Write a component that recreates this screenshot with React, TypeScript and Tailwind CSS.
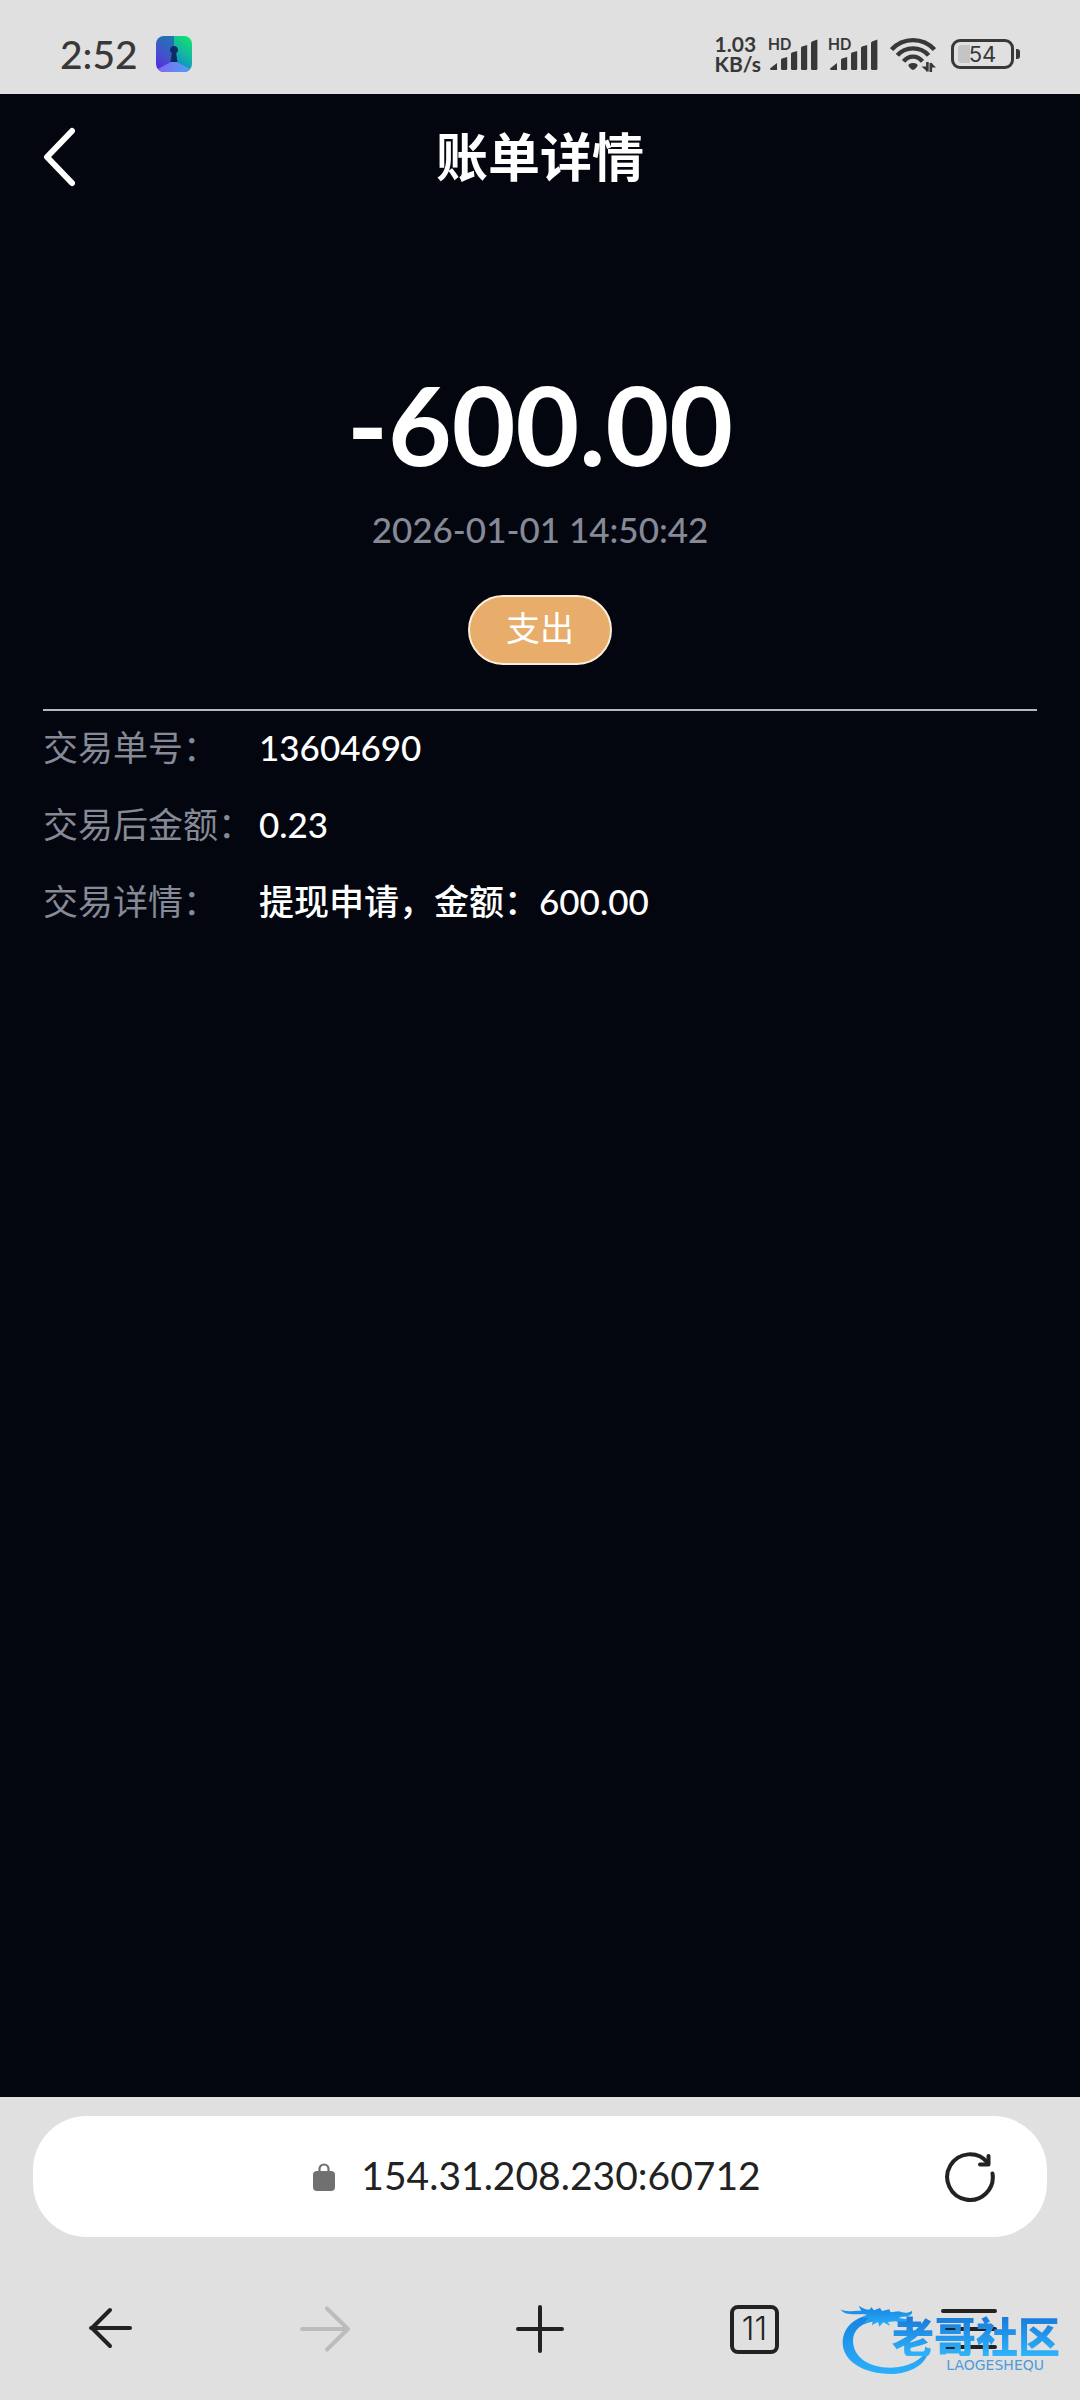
import type { ReactNode } from 'react';

const detailRows = [
  { label: '交易单号：', value: '13604690' },
  { label: '交易后金额：', value: '0.23' },
  { label: '交易详情：', value: '提现申请，金额：600.00' },
];

function LockAppIcon() {
  return (
    <svg className="size-9 shrink-0" viewBox="0 0 36 36" aria-hidden="true">
      <defs>
        <clipPath id="app-clip">
          <rect width="36" height="36" rx="8" />
        </clipPath>
        <linearGradient id="app-left" x1="0.6" y1="0" x2="0.2" y2="1">
          <stop offset="0" stopColor="#2272b4" />
          <stop offset="0.55" stopColor="#4450cf" />
          <stop offset="1" stopColor="#5a22dc" />
        </linearGradient>
        <linearGradient id="app-right" x1="0.7" y1="0" x2="0.3" y2="1">
          <stop offset="0" stopColor="#10e070" />
          <stop offset="0.45" stopColor="#14b8a0" />
          <stop offset="1" stopColor="#0a80d4" />
        </linearGradient>
        <linearGradient id="app-floor" x1="0" y1="0" x2="1" y2="0">
          <stop offset="0" stopColor="#8566f4" />
          <stop offset="1" stopColor="#4aa2f2" />
        </linearGradient>
      </defs>
      <g clipPath="url(#app-clip)">
        <rect width="18" height="36" fill="url(#app-left)" />
        <rect x="18" width="18" height="36" fill="url(#app-right)" />
        <path d="M0 34 L15 26 H21 L36 34 V36 H0 Z" fill="url(#app-floor)" />
        <path d="M18 10 a4 4 0 0 1 2.2 7.3 L21.5 26 H14.5 L15.8 17.3 A4 4 0 0 1 18 10 Z" fill="#0c2a63" />
      </g>
    </svg>
  );
}

function SignalBars() {
  return (
    <div className="relative h-9 w-[50px]">
      <span className="absolute top-0 left-0 font-['Inter'] text-[16px] leading-4 font-semibold">HD</span>
      <svg className="size-full" viewBox="0 0 50 36" fill="currentColor" aria-hidden="true">
        <path d="M2 32.5 L9 27 V34 H3.5 Q2 34 2 32.5Z" />
        <path d="M13 24 Q13 23 14 22.6 L19.2 21 V32.5 Q19.2 34 18 34 H14.2 Q13 34 13 32.5Z" />
        <path d="M23 18 Q23 17 24 16.6 L29.2 15 V32.5 Q29.2 34 28 34 H24.2 Q23 34 23 32.5Z" />
        <path d="M33 12 Q33 11 34 10.6 L39.2 9 V32.5 Q39.2 34 38 34 H34.2 Q33 34 33 32.5Z" />
        <path d="M43 7 Q43 6 44 5.4 L49.4 3.4 V32.5 Q49.4 34 48.2 34 H44.2 Q43 34 43 32.5Z" />
      </svg>
    </div>
  );
}

function WifiIcon() {
  return (
    <svg className="h-9 w-[46px] shrink-0" viewBox="0 0 46 36" fill="none" stroke="currentColor" strokeWidth="4.4" aria-hidden="true">
      <path d="M1.6 13.6 C13 1 33 1 44.4 13.6" />
      <path d="M7.4 19.4 C15.5 10 30.5 10 38.6 19.4" />
      <path d="M13.6 25.4 C18.5 19 27.5 19 32.4 25.4" />
      <path d="M23 27 C26 27 27.6 28.2 27.6 29.6 C27.6 31 24 34 23 34 C22 34 18.4 31 18.4 29.6 C18.4 28.2 20 27 23 27Z" fill="currentColor" stroke="none" />
      <path d="M37.4 26 V35.4 M40.8 36 V27" strokeWidth="2.6" />
      <path d="M37 35.5 L31.5 30.5 H37Z M41 26.5 L46 31.5 H41Z" fill="currentColor" stroke="none" />
    </svg>
  );
}

function Battery() {
  return (
    <div className="flex items-center gap-[2px]">
      <div className="relative flex h-[30px] w-[63px] items-center justify-center rounded-[9px] border-[3px] border-current">
        <span className="absolute inset-y-[3px] left-1 w-3 rounded-l-[4px] bg-[#c4c4c4]" />
        <span className="relative font-['Inter'] text-[22px] leading-none">54</span>
      </div>
      <span className="h-[10px] w-1 rounded-r-[3px] bg-current" />
    </div>
  );
}

function StatusBar() {
  return (
    <div className="flex h-[94px] shrink-0 items-center justify-between bg-[#e0e0e0] pt-[14px] pr-[60px] pl-[60px] text-[#383838]">
      <div className="flex items-center gap-[18px]">
        <time className="font-['Lato'] text-[39px] leading-none font-medium">2:52</time>
        <LockAppIcon />
      </div>
      <div className="flex items-center">
        <div className="mr-[7px] font-['Lato'] text-[21px] leading-5 font-bold">
          <p>1.03</p>
          <p>KB/s</p>
        </div>
        <div className="mr-3 flex gap-[10px]">
          <SignalBars />
          <SignalBars />
        </div>
        <WifiIcon />
        <div className="ml-[15px]">
          <Battery />
        </div>
      </div>
    </div>
  );
}

function NavButton({ label, disabled, children }: { label: string; disabled?: boolean; children: ReactNode }) {
  return (
    <button type="button" aria-label={label} disabled={disabled} className="flex h-20 items-center justify-center text-[#222] disabled:text-[#bcbcbc]">
      {children}
    </button>
  );
}

function LineIcon({ d }: { d: string }) {
  return (
    <svg className="size-[60px]" viewBox="0 0 60 60" fill="none" stroke="currentColor" strokeWidth="4" strokeLinecap="round" strokeLinejoin="round" aria-hidden="true">
      <path d={d} />
    </svg>
  );
}

function CommunityMark() {
  return (
    <div className="pointer-events-none absolute right-4 bottom-[22px] h-[76px] w-[226px]">
      <svg className="size-full" viewBox="58 64 678 228" aria-hidden="true">
        <defs>
          <linearGradient id="dragon" x1="0" y1="0" x2="0" y2="1">
            <stop offset="0" stopColor="#1482e2" />
            <stop offset="1" stopColor="#2cb0fb" />
          </linearGradient>
        </defs>
        <g fill="url(#dragon)">
          <path d="M160 100 C100 112 72 145 72 188 C74 244 138 280 215 280 C278 279 328 250 333 198 C312 238 268 260 215 261 C150 260 104 230 103 180 C103 148 128 124 178 120 Z" />
          <path d="M66 86 C82 96 104 90 128 90 L120 75 C132 84 142 86 152 87 L158 80 L166 89 L184 82 L190 91 L212 86 L216 95 L240 92 C254 98 270 98 280 90 C284 102 268 108 250 108 L240 112 L280 118 C276 130 262 132 246 128 L232 122 L208 124 L214 136 L194 125 L182 138 L178 124 L160 134 L162 119 L136 128 L148 112 L128 112 L146 102 C112 98 78 108 66 86 Z" />
        </g>
      </svg>
      <div className="absolute top-3 right-1 flex flex-col items-end gap-[2px]">
        <p className="bg-linear-to-b from-[#1976d8] to-[#30b4fa] bg-clip-text font-['Noto_Sans_CJK_SC',sans-serif] text-[42px] leading-[42px] font-black text-transparent">老哥社区</p>
        <p className="pr-4 font-['DejaVu_Sans'] text-[14px] leading-[14px] text-[#4e9bd8]">LAOGESHEQU</p>
      </div>
    </div>
  );
}

function BrowserBar() {
  return (
    <footer className="relative shrink-0 bg-[#e0e0e0] pt-[19px] pb-[31px]">
      <div className="mx-[33px] flex h-[121px] items-center rounded-[54px] bg-white px-[52px] text-[#222]">
        <span className="w-11" />
        <label className="flex flex-1 items-center justify-center gap-[26px]">
          <svg className="h-7 w-[22px] text-[#707070]" viewBox="0 0 22 28" aria-hidden="true">
            <rect y="8" width="22" height="20" rx="4" fill="currentColor" />
            <path d="M6.5 10 V6 a4.5 4.5 0 0 1 9 0 V10" fill="none" stroke="currentColor" strokeWidth="2.2" />
          </svg>
          <input
            type="text"
            aria-label="网址"
            defaultValue="154.31.208.230:60712"
            className="field-sizing-content bg-transparent pb-1 font-['Lato'] text-[39px] leading-[52px] outline-none"
          />
        </label>
        <button type="button" aria-label="刷新" className="size-[50px]">
          <svg className="size-full" viewBox="0 0 50 50" fill="none" stroke="currentColor" strokeWidth="4" strokeLinecap="round" strokeLinejoin="round" aria-hidden="true">
            <path d="M47.5 21.5 A22.8 22.8 0 1 1 42.5 10.5" />
            <path d="M43.5 4 V12.5 H35" />
          </svg>
        </button>
      </div>
      <nav className="mt-[52px] grid grid-cols-5 px-1">
        <NavButton label="后退">
          <LineIcon d="M49 29 H10 M29 11 L11 29 L29 47" />
        </NavButton>
        <NavButton label="前进" disabled>
          <LineIcon d="M6 30 H52 M31 9.5 L52 30 L31 50.5" />
        </NavButton>
        <NavButton label="新建标签页">
          <LineIcon d="M8 30 H52 M30 8 V52" />
        </NavButton>
        <NavButton label="标签页">
          <span className="flex size-[49px] items-center justify-center rounded-[8px] border-4 border-current font-['Inter'] text-[32px] leading-none font-light">11</span>
        </NavButton>
        <NavButton label="菜单">
          <LineIcon d="M4 12 H56 M4 30 H56 M4 48 H56" />
        </NavButton>
      </nav>
      <CommunityMark />
    </footer>
  );
}

export default function App() {
  return (
    <div className="flex min-h-screen flex-col bg-[#03060f] font-['Lato','Noto_Sans_CJK_SC',sans-serif] text-white">
      <StatusBar />
      <header className="grid h-[126px] shrink-0 grid-cols-[1fr_auto_1fr] items-center px-[43px]">
        <button type="button" aria-label="返回" className="h-[60px] w-8">
          <svg className="size-full" viewBox="0 0 32 60" fill="none" stroke="currentColor" strokeWidth="6" strokeLinecap="round" strokeLinejoin="round" aria-hidden="true">
            <path d="M29 4 L4 30 L29 56" />
          </svg>
        </button>
        <h1 className="text-[52px] leading-none font-bold">账单详情</h1>
      </header>
      <main className="flex-1 px-[43px] pt-[138px]">
        <section className="flex flex-col items-center border-b-2 border-[#b4b8c0] pb-11">
          <p className="text-[110px] leading-[130px] font-bold">-600.00</p>
          <time className="mt-[15px] text-[35px] leading-[52px] font-medium text-[#868996]">2026-01-01 14:50:42</time>
          <span className="mt-10 flex h-[70px] w-36 items-center justify-center rounded-full border-2 border-[#fbeedd] bg-[#e8ad6a] pb-1 text-[34px] leading-none">支出</span>
        </section>
        <dl>
          {detailRows.map((row) => (
            <div key={row.label} className="flex h-[77px] items-center pb-1 text-[35px]">
              <dt className="w-[216px] shrink-0 whitespace-nowrap text-[#868996]">{row.label}</dt>
              <dd className="font-medium">{row.value}</dd>
            </div>
          ))}
        </dl>
      </main>
      <BrowserBar />
    </div>
  );
}
